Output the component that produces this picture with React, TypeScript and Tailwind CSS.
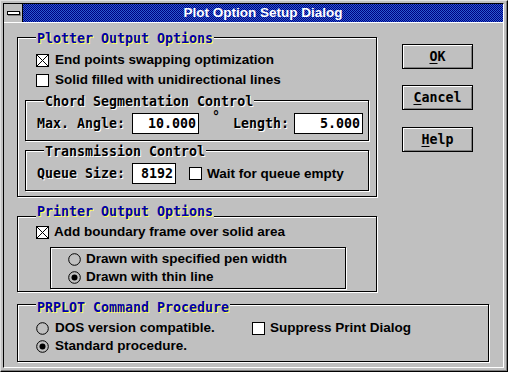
import React from "react";

const MONO = "font-['DejaVu_Sans_Mono',monospace] font-bold text-[13.3px] leading-[16px]";
const SANS = "font-['Liberation_Sans',Arial,sans-serif] font-bold text-[13.5px] leading-[16px] text-black";

function Check({ checked }: { checked?: boolean }) {
  return (
    <span className="relative block w-[13px] h-[13px] border border-black bg-white shrink-0">
      {checked && (
        <svg className="absolute left-0 top-0" width="11" height="11" viewBox="0 0 11 11">
          <path d="M0 0L11 11M11 0L0 11" stroke="black" strokeWidth="1" shapeRendering="crispEdges" />
        </svg>
      )}
    </span>
  );
}

function Radio({ on }: { on?: boolean }) {
  return (
    <svg width="13" height="13" viewBox="0 0 13 13" className="block shrink-0">
      <circle cx="6.5" cy="6.5" r="5.8" fill="none" stroke="black" strokeWidth="1" />
      {on && <circle cx="6.5" cy="6.5" r="3" fill="black" />}
    </svg>
  );
}

function GroupLabel({ text, top, main, left = 18 }: { text: string; top: number; main?: boolean; left?: number }) {
  return (
    <span
      className={`absolute px-[1px] bg-[#c0c0c0] whitespace-nowrap ${MONO} ${
        main ? "text-[#0000a8] [text-shadow:1px_1px_0_#ffff54]" : "text-black [text-shadow:1px_1px_0_#ffffff]"
      }`}
      style={{ top, left }}
    >
      {text}
    </span>
  );
}

const ETCH = "relative border border-black shadow-[1px_1px_0_#fff,inset_1px_1px_0_#fff]";

function Button({ first, rest, className = "" }: { first: string; rest: string; className?: string }) {
  return (
    <div
      className={`w-[71px] h-[25px] flex items-center justify-center border border-black bg-[#c0c0c0] shadow-[inset_1px_1px_0_#fff,inset_-1px_-1px_0_#808080] ${MONO} text-black ${className}`}
    >
      <span>
        <span className="underline underline-offset-[2px]">{first}</span>
        {rest}
      </span>
    </div>
  );
}

function Input({ value, w }: { value: string; w: number }) {
  return (
    <div
      className={`h-[21px] border border-black bg-white flex items-center justify-end pr-[2px] ${MONO} text-black`}
      style={{ width: w }}
    >
      {value}
    </div>
  );
}

export default function App() {
  return (
    <div className="w-[508px] h-[372px] bg-[#c0c0c0] border-t border-l border-t-[#e0e0e0] border-l-[#e0e0e0] border-r border-b border-r-black border-b-black shadow-[inset_-1px_-1px_0_#808080] p-[2px] pr-[3px] pb-[3px]">
      <div className="w-full h-full border-t border-l border-black border-r border-b border-r-white border-b-white flex flex-col">
        {/* Title bar */}
        <div className="h-[19px] flex border-b border-b-white shrink-0">
          <div className="w-[19px] h-[18px] bg-[#c0c0c0] border-r border-black flex items-center justify-center">
            <div className="w-[13px] h-[4px] bg-white border border-black shadow-[1px_1px_0_#808080]" />
          </div>
          <div className="flex-1 h-[18px] bg-[image:repeating-conic-gradient(#000080_0%_25%,#2a5ad0_0%_50%)] bg-[length:2px_2px] flex items-center justify-center">
            <span className="font-['Liberation_Sans',Arial,sans-serif] font-bold text-[13.5px] leading-[16px] text-white">
              Plot Option Setup Dialog
            </span>
          </div>
        </div>

        {/* Body */}
        <div className="flex-1 pl-[13px] pt-[14px] flex flex-col">
          <div className="flex">
            <div className="flex flex-col">
              {/* Plotter group */}
              <div className={`${ETCH} w-[360px] h-[160px] pl-[7px] pt-[13px]`}>
                <GroupLabel text="Plotter Output Options" top={-7} main />
                <div className={`h-[18px] pl-[11px] flex items-center gap-[6px] ${SANS}`}>
                  <Check checked />
                  <span>End points swapping optimization</span>
                </div>
                <div className={`h-[18px] mt-[2px] pl-[11px] flex items-center gap-[6px] ${SANS}`}>
                  <Check />
                  <span>Solid filled with unidirectional lines</span>
                </div>
                {/* Chord */}
                <div className={`${ETCH} w-[344px] h-[41px] mt-[11px] pl-[11px] pt-[12px]`}>
                  <GroupLabel text="Chord Segmentation Control" top={-7} left={18} />
                  <div className="h-[21px] flex items-center">
                    <span className={`${MONO} text-black [text-shadow:1px_1px_0_#fff] w-[95px]`}>Max. Angle:</span>
                    <Input value="10.000" w={67} />
                    <span className={`${MONO} text-black self-start ml-[13px] mt-[-4px]`}>°</span>
                    <span className={`${MONO} text-black [text-shadow:1px_1px_0_#fff] ml-[13px] w-[61px]`}>Length:</span>
                    <Input value="5.000" w={69} />
                  </div>
                </div>
                {/* Transmission */}
                <div className={`${ETCH} w-[344px] h-[41px] mt-[9px] pl-[11px] pt-[12px]`}>
                  <GroupLabel text="Transmission Control" top={-7} left={18} />
                  <div className="h-[21px] flex items-center">
                    <span className={`${MONO} text-black [text-shadow:1px_1px_0_#fff] w-[95px]`}>Queue Size:</span>
                    <Input value="8192" w={44} />
                    <span className="ml-[13px]">
                      <Check />
                    </span>
                    <span className={`${SANS} ml-[5px]`}>Wait for queue empty</span>
                  </div>
                </div>
              </div>

              {/* Printer group */}
              <div className={`${ETCH} w-[360px] h-[76px] mt-[19px] pl-[7px] pt-[6px]`}>
                <GroupLabel text="Printer Output Options" top={-13} main />
                <div className={`h-[18px] pl-[11px] flex items-center gap-[5px] ${SANS}`}>
                  <Check checked />
                  <span>Add boundary frame over solid area</span>
                </div>
                <div className={`${ETCH} w-[296px] h-[42px] mt-[6px] ml-[25px] pl-[17px] pt-[2px]`}>
                  <div className={`h-[18px] flex items-center gap-[5px] ${SANS}`}>
                    <Radio />
                    <span>Drawn with specified pen width</span>
                  </div>
                  <div className={`h-[18px] flex items-center gap-[5px] ${SANS}`}>
                    <Radio on />
                    <span>Drawn with thin line</span>
                  </div>
                </div>
              </div>
            </div>

            {/* Buttons */}
            <div className="flex flex-col ml-[25px] pt-[7px]">
              <Button first="O" rest="K" />
              <Button first="C" rest="ancel" className="mt-[16px]" />
              <Button first="H" rest="elp" className="mt-[17px]" />
            </div>
          </div>

          {/* PRPLOT group */}
          <div className={`${ETCH} w-[472px] h-[58px] mt-[12px] pl-[18px] pt-[14px]`}>
            <GroupLabel text="PRPLOT Command Procedure" top={-5} main />
            <div className="grid grid-cols-[216px_1fr]">
              <div className={`h-[18px] flex items-center gap-[6px] ${SANS}`}>
                <Radio />
                <span>DOS version compatible.</span>
              </div>
              <div className={`h-[18px] flex items-center gap-[5px] ${SANS}`}>
                <Check />
                <span>Suppress Print Dialog</span>
              </div>
              <div className={`h-[18px] flex items-center gap-[6px] ${SANS}`}>
                <Radio on />
                <span>Standard procedure.</span>
              </div>
            </div>
          </div>
        </div>
      </div>
    </div>
  );
}
